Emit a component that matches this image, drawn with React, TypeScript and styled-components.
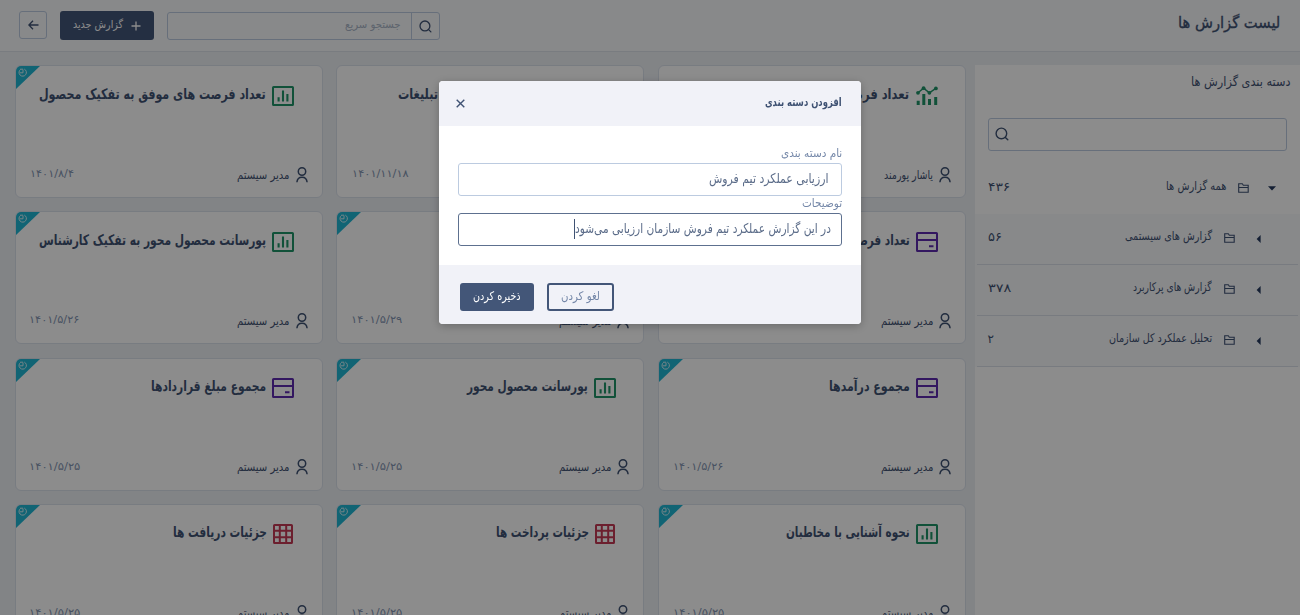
import React, { useLayoutEffect, useRef, useState } from "react";
import styled, { createGlobalStyle, css } from "styled-components";

const ink = "#3f5273";

const Global = createGlobalStyle`
  * { box-sizing: border-box; }
  html, body { margin: 0; height: 100%; overflow: hidden; }
  body { background: #edf0f5; font-family: "DejaVu Sans", sans-serif; color: ${ink}; }
  button, input { font-family: inherit; }
`;

const TextBox = styled.span<{ $width: number; $shift?: number }>`
  display: flex;
  flex: none;
  width: ${(p) => p.$width}px;
  white-space: nowrap;
  margin-top: ${(p) => p.$shift || 0}px;
`;
const TextInner = styled.span`
  flex: none;
  display: block;
  transform-origin: right center;
`;

/* Sets a label to an exact measure, whatever face the system provides. */
function Label({ width, shift, children }: { width: number; shift?: number; children: React.ReactNode }) {
  const ref = useRef<HTMLSpanElement>(null);
  const [scale, setScale] = useState(1);
  useLayoutEffect(() => {
    if (ref.current) setScale(width / ref.current.offsetWidth);
  }, [width]);
  return (
    <TextBox $width={width} $shift={shift}>
      <TextInner ref={ref} style={{ transform: `scaleX(${scale})` }}>{children}</TextInner>
    </TextBox>
  );
}

const Page = styled.div`
  direction: rtl;
  height: 615px;
  width: 1300px;
  overflow: hidden;
  display: flex;
  flex-direction: column;
`;

const Header = styled.header`
  height: 52px;
  flex: none;
  background: #f7f9fc;
  border-bottom: 1px solid #dde2e9;
  display: flex;
  align-items: center;
  justify-content: space-between;
  padding: 0 20px 0 19px;
`;
const PageTitle = styled.h1`
  margin: 0 0 6px;
  font-size: 16px;
  line-height: 24px;
  font-weight: 400;
  -webkit-text-stroke: 0.35px ${ink};
`;
const Actions = styled.div`
  display: flex;
  align-items: center;
`;
const QuickSearch = styled.div`
  display: flex;
  width: 273px;
  height: 28px;
  margin: 1px 0 0 12.5px;
  border: 1px solid #bccbe0;
  border-radius: 3px;
`;
const SearchButton = styled.div`
  width: 28px;
  border-left: 1px solid #bccbe0;
  display: grid;
  place-items: center;
`;
const Placeholder = styled.div`
  padding: 2px 10px 0 0;
  font-size: 11px;
  line-height: 20px;
  color: #a9b5c6;
`;
const NewReport = styled.button`
  width: 94px;
  height: 29px;
  margin: 0 0 0 13px;
  padding: 0 13px 0 0;
  border: 0;
  border-radius: 3px;
  background: #435678;
  color: #fff;
  display: flex;
  align-items: center;
  gap: 8px;
  font-size: 11px;
`;
const BackButton = styled.button`
  width: 28px;
  height: 28px;
  padding: 0;
  border: 1px solid #bccbe0;
  border-radius: 3px;
  background: transparent;
  display: grid;
  place-items: center;
  margin-bottom: 1px;
`;

const Main = styled.main`
  flex: 1;
  min-height: 0;
  display: flex;
  align-items: flex-start;
  padding-top: 13px;
  gap: 9px;
`;

const Sidebar = styled.aside`
  width: 325px;
  flex: none;
  height: 550px;
  background: #fff;
`;
const SideTitle = styled.h2`
  margin: 0;
  padding: 6px 10px 0 0;
  height: 53px;
  font-size: 13px;
  line-height: 22px;
  font-weight: 400;
`;
const SideSearch = styled.div`
  margin: 0 13px 0 13px;
  height: 33px;
  border: 1px solid #bccbe0;
  border-radius: 3px;
  display: flex;
  align-items: center;
  justify-content: flex-end;
  padding: 0 0 2px 6px;
`;
const TreeRoot = styled.div`
  height: 62.5px;
  padding: 10px 24px 0 13px;
  display: flex;
  align-items: center;
`;
const Tree = styled.div`
  background: #f7f9fc;
  padding: 0 2px;
`;
const TreeRow = styled.div`
  height: 51.2px;
  border-bottom: 1px solid #dbe1ea;
  padding: 0 36px 3px 11px;
  display: flex;
  align-items: center;
`;
const Caret = styled.span`
  width: 8px;
  display: grid;
  place-items: center;
  margin: 3px 0 0 19px;
`;
const Folder = styled.span`
  display: flex;
  margin: 2px 0 0 12px;
`;
const TreeName = styled.span`
  font-size: 12px;
  line-height: 18px;
  flex: 1;
`;
const Count = styled.span`
  font-size: 12px;
  line-height: 18px;
`;

const Cards = styled.section`
  flex: none;
  display: grid;
  grid-template-columns: repeat(3, 308px);
  grid-auto-rows: 133px;
  gap: 13.3px 13.75px;
`;
const Card = styled.article`
  position: relative;
  background: #fff;
  border: 1px solid #dbe2ec;
  border-radius: 6px;
  overflow: hidden;
  padding: 17.5px 27.5px 14px 14px;
  display: flex;
  flex-direction: column;
  justify-content: space-between;
`;
const Ribbon = styled.svg`
  position: absolute;
  left: 0;
  top: 0;
`;
const CardHead = styled.div<{ $table?: boolean }>`
  display: flex;
  align-items: flex-start;
  gap: 6px;
  height: 24px;
  margin-right: ${(p) => (p.$table ? 1 : 0)}px;
  font-size: 14.5px;
  font-weight: 700;
  line-height: 21px;
  svg { margin-top: 2px; flex: none; }
`;
const CardFoot = styled.div`
  display: flex;
  align-items: center;
  margin-right: -13.5px;
  height: 17px;
  font-size: 12px;
  svg { margin-left: 6px; }
`;
const DateText = styled.time`
  direction: ltr;
  margin: 0 auto 2px 0;
  font-size: 10px;
  color: #8395b2;
`;
const DateSlot = styled.div`
  direction: ltr;
  flex: 1;
  display: flex;
`;

const Overlay = styled.div`
  position: fixed;
  inset: 0;
  background: rgba(0, 0, 0, 0.45);
  direction: rtl;
`;
const Dialog = styled.div`
  width: 422px;
  height: 243px;
  margin: 81px 439px 0;
  border-radius: 4px;
  overflow: hidden;
  background: #fff;
  box-shadow: 0 2px 10px rgba(0, 0, 0, 0.25);
  display: flex;
  flex-direction: column;
`;
const DialogHead = styled.div`
  height: 45px;
  background: #f1f2f8;
  display: flex;
  align-items: center;
  justify-content: space-between;
  padding: 0 19px 0 17px;
  font-size: 11.5px;
  line-height: 18px;
  font-weight: 700;
`;
const DialogBody = styled.div`
  flex: 1;
  padding: 19px 19px 0;
`;
const FieldLabel = styled.div`
  height: 18px;
  line-height: 17px;
  font-size: 11.5px;
  color: #7487a8;
`;
const Field = styled.div<{ $active?: boolean }>`
  height: 33px;
  margin-bottom: -1px;
  border: 1px solid ${(p) => (p.$active ? "#5d708f" : "#bccbe0")};
  border-radius: 3px;
  display: flex;
  align-items: flex-start;
  padding: 3px ${(p) => (p.$active ? 10 : 12)}px 0 0;
  font-size: 13.5px;
  line-height: 22px;
  color: #5a6b88;
`;
const TextCursor = styled.span`
  width: 1px;
  height: 20px;
  margin-top: 2px;
  background: #3f5273;
`;
const DialogFoot = styled.div`
  height: 59px;
  background: #f1f2f8;
  display: flex;
  gap: 13px;
  padding: 18px 0 0 21px;
  justify-content: flex-end;
`;
const DialogButton = styled.button<{ $primary?: boolean }>`
  height: 28px;
  padding: 0 0 2px;
  border-radius: 3px;
  display: flex;
  align-items: center;
  justify-content: center;
  font-size: 12px;
  ${(p) =>
    p.$primary
      ? css`width: 74px; border: 0; background: #435678; color: #fff;`
      : css`width: 67px; border: 2px solid #435678; background: transparent; color: #7487a8;`}
`;

const SearchIcon = ({ size }: { size: number }) => (
  <svg width={size} height={size} viewBox="0 0 14 14" fill="none" stroke={ink} strokeWidth="1.4" strokeLinecap="round">
    <circle cx="6.4" cy="6.4" r="5.3" /><path d="M10.4 10.4 12.8 12.8" />
  </svg>
);
const FolderIcon = () => (
  <svg width="11" height="10" viewBox="0 0 11 10" fill="none" stroke={ink} strokeWidth="1.1">
    <path d="M.7 9.2V.8h3.6l1 1.4h4.9v7ZM.7 4.5h9.5" />
  </svg>
);
const PersonIcon = () => (
  <svg width="12" height="16" viewBox="0 0 12 16" fill="none" stroke={ink} strokeWidth="1.5">
    <circle cx="6" cy="4.5" r="3.7" /><path d="M.9 15.3c.3-3.3 2.3-5.1 5.1-5.1s4.8 1.8 5.1 5.1" />
  </svg>
);

type Kind = "bar" | "trend" | "card" | "table";
function ReportIcon({ kind }: { kind: Kind }) {
  if (kind === "trend")
    return (
      <svg width="22" height="20" viewBox="0 0 22 20">
        <path d="M2 6.8 7.6 2.2l5.8 4.6 6.4-4.4" fill="none" stroke="#1f9468" strokeWidth="1.4" />
        <g fill="#1f9468">
          <circle cx="2" cy="6.8" r="1.9" /><circle cx="7.6" cy="2.2" r="1.9" /><circle cx="13.4" cy="6.8" r="1.9" /><circle cx="19.9" cy="2.4" r="1.9" />
          <path d="M.7 14.8h3V19h-3zM6.3 8h3v11h-3zM12 13h3v6h-3zM18.2 11h3v8h-3z" />
        </g>
      </svg>
    );
  if (kind === "card")
    return (
      <svg width="22" height="20" viewBox="0 0 22 20" fill="none" stroke="#5e2bb0" strokeWidth="2">
        <rect x="1" y="1" width="20" height="18" rx=".6" /><path d="M1 8h20M13 14.2h4.5" />
      </svg>
    );
  if (kind === "table")
    return (
      <svg width="20" height="20" viewBox="0 0 20 20" fill="none" stroke="#c53a55" strokeWidth="2">
        <rect x="1" y="1" width="18" height="18" rx=".6" /><path d="M6.8 1v18M13.2 1v18M1 6.8h18M1 13.2h18" />
      </svg>
    );
  return (
    <svg width="22" height="20" viewBox="0 0 22 20" fill="none" stroke="#1f9468" strokeWidth="2">
      <rect x="1" y="1" width="20" height="18" rx=".6" /><path d="M6.6 11.2v4.3M11 4.5v11M15.4 8v7.5" strokeWidth="2.1" />
    </svg>
  );
}

const CornerMark = () => (
  <Ribbon width="24" height="23" viewBox="0 0 24 23">
    <path d="M0 0h24L0 23z" fill="#1fb6d4" />
    <g fill="none" stroke="#d5f1f6" strokeWidth="1">
      <path d="M4.6 3.4A3.7 3.7 0 1 0 8.3 3.1M4.2 3.2H7" /><path d="M7 3.6v3.2H3.8" />
    </g>
  </Ribbon>
);

type Report = { title: string; w: number; kind: Kind; date: string; dw: number; mark?: boolean; user?: string };
const reports: Report[] = [
  { title: "تعداد فرصت های موفق به تفکیک منبع", w: 216, kind: "trend", date: "۱۴۰۱/۱۱/۱۸", dw: 57, user: "یاشار پورمند" },
  { title: "تعداد فرصت های حاصل از تبلیغات", w: 190, kind: "bar", date: "۱۴۰۱/۱۱/۱۸", dw: 57 },
  { title: "تعداد فرصت های موفق به تفکیک محصول", w: 227, kind: "bar", date: "۱۴۰۱/۸/۴", dw: 44, mark: true },
  { title: "تعداد فرصت های فروش", w: 126, kind: "card", date: "۱۴۰۱/۵/۲۹", dw: 51, mark: true },
  { title: "مجموع پرداخت ها", w: 100, kind: "card", date: "۱۴۰۱/۵/۲۹", dw: 51, mark: true },
  { title: "پورسانت محصول محور به تفکیک کارشناس", w: 227, kind: "bar", date: "۱۴۰۱/۵/۲۶", dw: 50, mark: true },
  { title: "مجموع درآمدها", w: 81, kind: "card", date: "۱۴۰۱/۵/۲۶", dw: 50, mark: true },
  { title: "پورسانت محصول محور", w: 121, kind: "bar", date: "۱۴۰۱/۵/۲۵", dw: 51, mark: true },
  { title: "مجموع مبلغ قراردادها", w: 115, kind: "card", date: "۱۴۰۱/۵/۲۵", dw: 51, mark: true },
  { title: "نحوه آشنایی با مخاطبان", w: 124, kind: "bar", date: "۱۴۰۱/۵/۲۵", dw: 51, mark: true },
  { title: "جزئیات پرداخت ها", w: 93, kind: "table", date: "۱۴۰۱/۵/۲۵", dw: 51, mark: true },
  { title: "جزئیات دریافت ها", w: 94, kind: "table", date: "۱۴۰۱/۵/۲۵", dw: 51, mark: true },
];

const folders = [
  { name: "گزارش های سیستمی", w: 87, count: "۵۶", cw: 14 },
  { name: "گزارش های پرکاربرد", w: 79, count: "۳۷۸", cw: 23 },
  { name: "تحلیل عملکرد کل سازمان", w: 103, count: "۲", cw: 6 },
];

export default function App() {
  return (
    <>
      <Global />
      <Page>
        <Header>
          <PageTitle><Label width={102}>لیست گزارش ها</Label></PageTitle>
          <Actions>
            <QuickSearch>
              <SearchButton><SearchIcon size={13} /></SearchButton>
              <Placeholder><Label width={55}>جستجو سریع</Label></Placeholder>
            </QuickSearch>
            <NewReport>
              <svg width="10" height="10" viewBox="0 0 10 10" stroke="#fff" strokeWidth="1.3"><path d="M5 .5v9M.5 5h9" /></svg>
              <Label width={50} shift={-3}>گزارش جدید</Label>
            </NewReport>
            <BackButton>
              <svg width="11" height="10" viewBox="0 0 11 10" fill="none" stroke={ink} strokeWidth="1.3"><path d="M10.5 5H1M5 .8.9 5 5 9.2" /></svg>
            </BackButton>
          </Actions>
        </Header>
        <Main>
          <Sidebar>
            <SideTitle><Label width={99}>دسته بندی گزارش ها</Label></SideTitle>
            <SideSearch><SearchIcon size={14} /></SideSearch>
            <TreeRoot>
              <Caret>
                <svg width="8" height="5" viewBox="0 0 8 5"><path d="M0 .3h8L4 4.5z" fill="#263a5e" /></svg>
              </Caret>
              <Folder><FolderIcon /></Folder>
              <TreeName><Label width={60} shift={-3}>همه گزارش ها</Label></TreeName>
              <Count><Label width={22}>۴۳۶</Label></Count>
            </TreeRoot>
            <Tree>
              {folders.map((f) => (
                <TreeRow key={f.name}>
                  <Caret>
                    <svg width="5" height="8" viewBox="0 0 5 8"><path d="M4.6 0v8L.6 4z" fill="#263a5e" /></svg>
                  </Caret>
                  <Folder><FolderIcon /></Folder>
                  <TreeName><Label width={f.w} shift={-3}>{f.name}</Label></TreeName>
                  <Count><Label width={f.cw}>{f.count}</Label></Count>
                </TreeRow>
              ))}
            </Tree>
          </Sidebar>
          <Cards>
            {reports.map((r, i) => (
              <Card key={i}>
                {r.mark && <CornerMark />}
                <CardHead $table={r.kind === "table"}>
                  <ReportIcon kind={r.kind} />
                  <Label width={r.w}>{r.title}</Label>
                </CardHead>
                <CardFoot>
                  <PersonIcon />
                  <Label width={r.user ? 49 : 53}>{r.user || "مدیر سیستم"}</Label>
                  <DateSlot>
                    <DateText><FixedDate width={r.dw}>{r.date}</FixedDate></DateText>
                  </DateSlot>
                </CardFoot>
              </Card>
            ))}
          </Cards>
        </Main>
      </Page>
      <Overlay>
        <Dialog role="dialog">
          <DialogHead>
            <Label width={77} shift={-3}>افزودن دسته بندی</Label>
            <svg width="9" height="9" viewBox="0 0 9 9" stroke={ink} strokeWidth="1.4"><path d="m.7.7 7.6 7.6M8.3.7.7 8.3" /></svg>
          </DialogHead>
          <DialogBody>
            <FieldLabel><Label width={61}>نام دسته بندی</Label></FieldLabel>
            <Field><Label width={120}>ارزیابی عملکرد تیم فروش</Label></Field>
            <FieldLabel><Label width={40}>توضیحات</Label></FieldLabel>
            <Field $active>
              <Label width={256}>در این گزارش عملکرد تیم فروش سازمان ارزیابی می‌شود</Label>
              <TextCursor />
            </Field>
          </DialogBody>
          <DialogFoot>
            <DialogButton><Label width={39}>لغو کردن</Label></DialogButton>
            <DialogButton $primary><Label width={48}>ذخیره کردن</Label></DialogButton>
          </DialogFoot>
        </Dialog>
      </Overlay>
    </>
  );
}

const DateFrame = styled.span`
  display: block;
  direction: rtl;
`;

/* Dates sit at the left of a card but share the right-anchored label. */
function FixedDate({ width, children }: { width: number; children: React.ReactNode }) {
  return <DateFrame><Label width={width}>{children}</Label></DateFrame>;
}
